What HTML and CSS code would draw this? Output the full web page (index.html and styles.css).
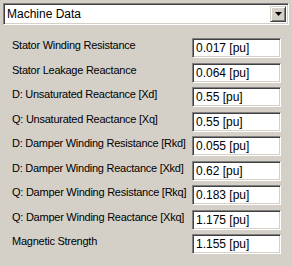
FILE: index.html
```html
<!DOCTYPE html>
<html lang="en">
<head>
    <meta charset="UTF-8">
    <title>Machine Data</title>
    <link rel="stylesheet" href="styles.css">
</head>
<body>
<div id="panel">
    <div class="combo">
        <div class="combo-text">Machine Data</div>
        <div class="combo-btn">
            <svg width="7" height="4" viewBox="0 0 7 4"><path d="M0 0h7L3.5 4z" fill="#000"/></svg>
        </div>
    </div>
    <div class="rows">
        <div class="row"><span class="lbl">Stator Winding Resistance</span><div class="field">0.017 [pu]</div></div>
        <div class="row"><span class="lbl">Stator Leakage Reactance</span><div class="field">0.064 [pu]</div></div>
        <div class="row"><span class="lbl">D: Unsaturated Reactance [Xd]</span><div class="field">0.55 [pu]</div></div>
        <div class="row"><span class="lbl">Q: Unsaturated Reactance [Xq]</span><div class="field">0.55 [pu]</div></div>
        <div class="row"><span class="lbl">D: Damper Winding Resistance [Rkd]</span><div class="field">0.055 [pu]</div></div>
        <div class="row"><span class="lbl">D: Damper Winding Reactance [Xkd]</span><div class="field">0.62 [pu]</div></div>
        <div class="row"><span class="lbl">Q: Damper Winding Resistance [Rkq]</span><div class="field">0.183 [pu]</div></div>
        <div class="row"><span class="lbl">Q: Damper Winding Reactance [Xkq]</span><div class="field">1.175 [pu]</div></div>
        <div class="row"><span class="lbl">Magnetic Strength</span><div class="field">1.155 [pu]</div></div>
    </div>
</div>
</body>
</html>
```
FILE: styles.css
```css
*{
    margin:0;
    padding:0;
    box-sizing:border-box;
}
body{
    background:#d4d0c8;
    font-family:"Liberation Sans", Arial, sans-serif;
    font-size:11px;
    color:#000;
}
#panel{
    width:292px;
    height:266px;
    padding:3px 3px 0 3px;
}
.combo{
    height:22px;
    display:flex;
    background:#fff;
    border-top:1px solid #808080;
    border-left:1px solid #808080;
    border-right:1px solid #fff;
    border-bottom:1px solid #fff;
    box-shadow:inset 1px 1px 0 #404040, inset -1px -1px 0 #d4d0c8;
    padding:2px;
}
.combo-text{
    flex:1;
    line-height:16px;
    padding-left:1px;
    font-size:12px;
}
.combo-btn{
    width:16px;
    height:16px;
    background:#d4d0c8;
    border-top:1px solid #d4d0c8;
    border-left:1px solid #d4d0c8;
    border-right:1px solid #404040;
    border-bottom:1px solid #404040;
    box-shadow:inset 1px 1px 0 #fff, inset -1px -1px 0 #808080;
    display:flex;
    align-items:center;
    justify-content:center;
}
.rows{
    display:flex;
    flex-direction:column;
    gap:4.5px;
    padding:13px 8px 0 9px;
}
.row{
    display:flex;
    justify-content:space-between;
    align-items:flex-start;
    height:20px;
}
.lbl{
    white-space:nowrap;
    letter-spacing:-0.25px;
    line-height:13px;
    padding-top:1px;
}
.field{
    width:89px;
    height:20px;
    background:#fff;
    border-top:1px solid #808080;
    border-left:1px solid #808080;
    border-right:1px solid #fff;
    border-bottom:1px solid #fff;
    box-shadow:inset 1px 1px 0 #404040, inset -1px -1px 0 #d4d0c8;
    padding-left:3px;
    line-height:18px;
    font-size:12px;
}
```
